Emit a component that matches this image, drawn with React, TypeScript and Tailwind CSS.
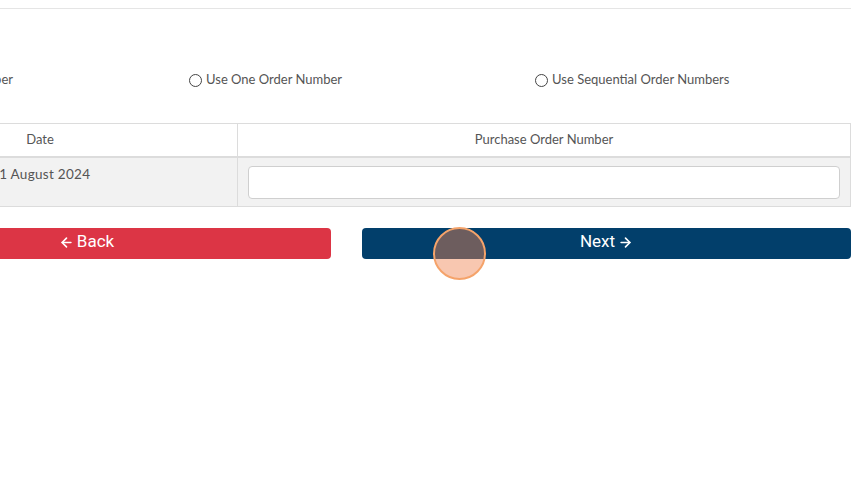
import React from "react";
import { ArrowLeft, ArrowRight } from "lucide-react";

function Radio({ label }: { label: string }) {
  return (
    <label className="flex items-center gap-[4px] whitespace-nowrap">
      <span className="inline-block w-[13px] h-[13px] rounded-full border border-[#444] bg-white" />
      <span>{label}</span>
    </label>
  );
}

export default function App() {
  return (
    <div
      className="relative w-[860px] h-[481px] bg-white overflow-hidden text-[#555]"
      style={{ fontFamily: "Lato, 'Open Sans', sans-serif" }}
    >
      <div className="h-[9px] border-b border-[#e5e5e5] w-[851px]" />
      <div className="ml-[-158px] w-[1009px]">
        {/* radio row */}
        <div className="flex items-center h-[62px] mt-[48px] pb-[16px] text-[13px]">
          <div className="w-[171px] flex justify-end">
            <Radio label="Use Individual Order Number" />
          </div>
          <div className="ml-[176px]">
            <Radio label="Use One Order Number" />
          </div>
          <div className="ml-[193px]">
            <Radio label="Use Sequential Order Numbers" />
          </div>
        </div>
        {/* table */}
        <div className="mt-[4px] border border-[#dcdcdc] text-[13px]">
          <div className="flex h-[34px] border-b-2 border-[#dcdcdc] bg-white">
            <div className="w-[395px] flex items-center justify-center border-r border-[#dcdcdc]">
              Date
            </div>
            <div className="flex-1 flex items-center justify-center">Purchase Order Number</div>
          </div>
          <div className="flex h-[48px] bg-[#f2f2f2]">
            <div className="w-[395px] border-r border-[#dcdcdc] pl-[149px] pt-[6px] text-[13.5px] tracking-[0.3px]">
              <span className="ml-[-1px]">31 August 2024</span>
            </div>
            <div className="flex-1 px-[10px] pt-[8px]">
              <div className="h-[33px] rounded-[4px] border border-[#cfcfcf] bg-white" />
            </div>
          </div>
        </div>
        {/* buttons */}
        <div className="flex gap-[31px] mt-[21px]">
          <button
            className="flex-1 h-[31px] pb-[3px] rounded-[4px] bg-[#dc3545] text-white text-[17px] flex items-center justify-center gap-[3px]"
            style={{ fontFamily: "'Liberation Sans Narrow', 'Roboto', sans-serif" }}
          >
            <ArrowLeft size={15} strokeWidth={2.6} />
            <span>Back</span>
          </button>
          <button
            className="flex-1 h-[31px] pb-[3px] rounded-[4px] bg-[#023f6b] text-white text-[17px] flex items-center justify-center gap-[3px]"
            style={{ fontFamily: "'Liberation Sans Narrow', 'Roboto', sans-serif" }}
          >
            <span>Next</span>
            <ArrowRight size={15} strokeWidth={2.6} />
          </button>
        </div>
      </div>
      {/* tap indicator */}
      <div className="absolute left-[433px] top-[227px] w-[53px] h-[53px] rounded-full border-2 border-[#f5a36a] bg-[rgba(240,130,80,0.45)]" />
    </div>
  );
}
